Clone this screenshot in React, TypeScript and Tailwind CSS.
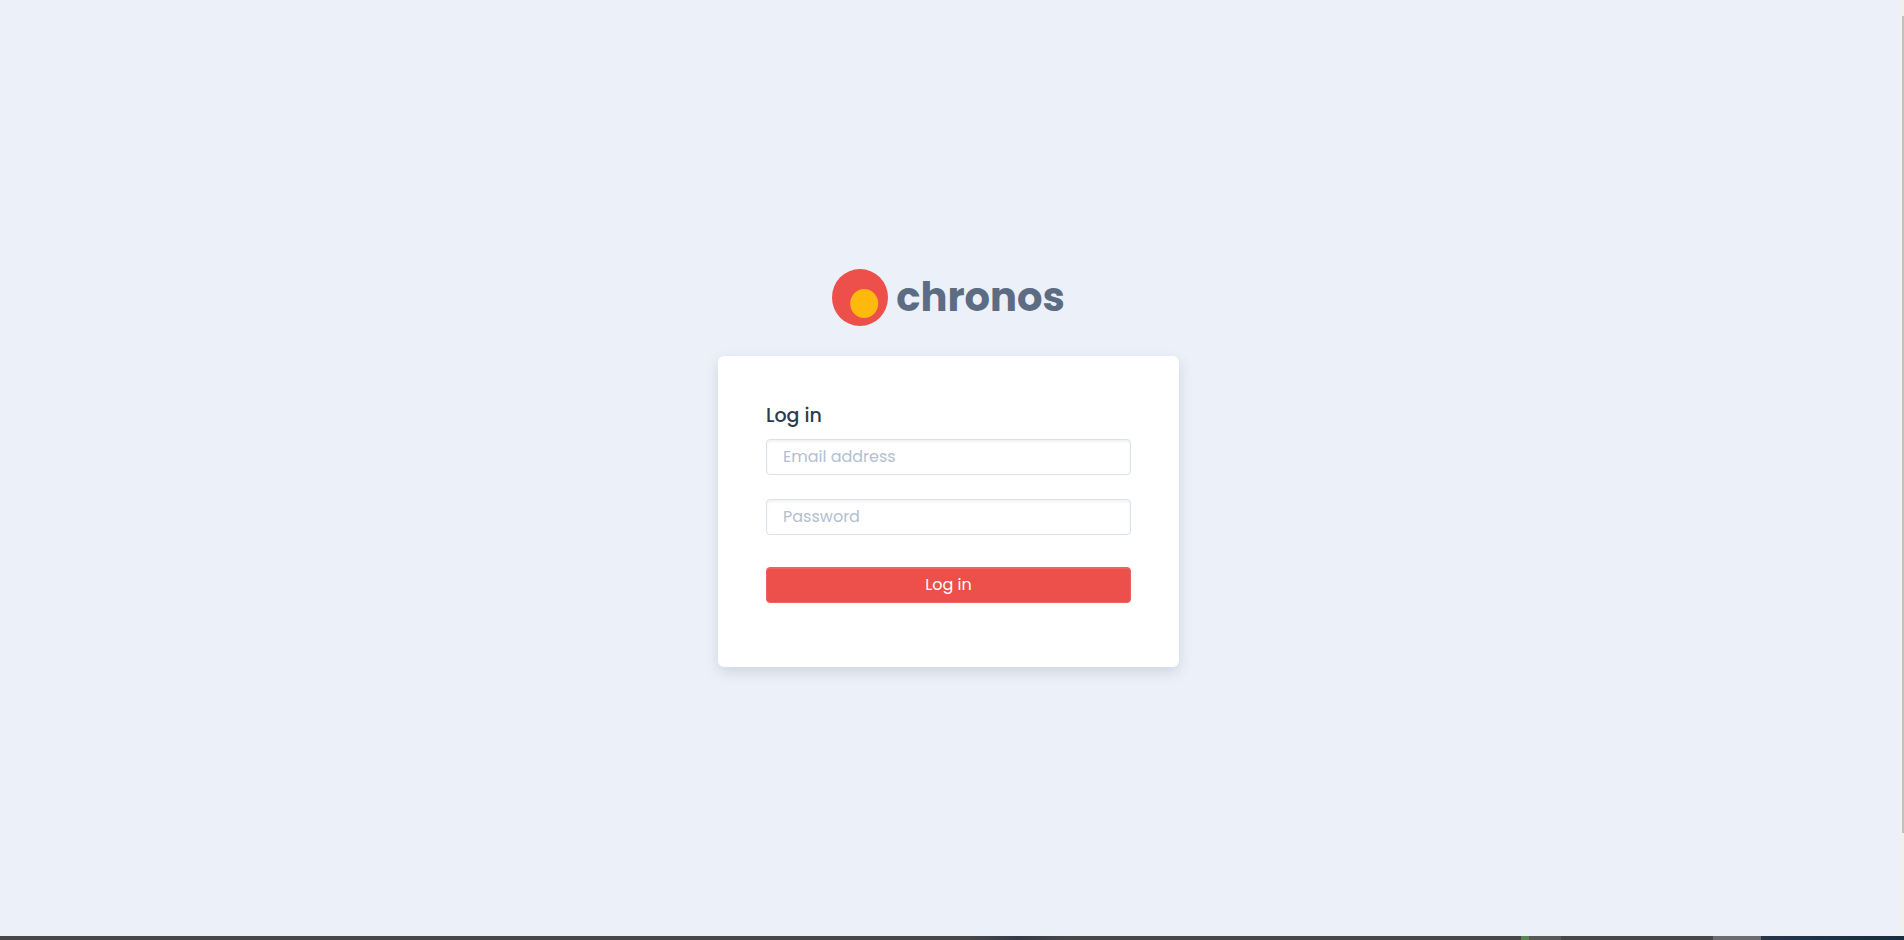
import { useState } from "react";

function Logo() {
  return (
    <div className="flex items-center gap-2">
      <svg className="h-[57px] w-14" viewBox="0 0 56 57" aria-hidden="true">
        <ellipse cx="28" cy="28.5" rx="28" ry="28.5" fill="#ed4f4b" />
        <ellipse cx="32.2" cy="34.5" rx="14" ry="14.5" fill="#ffb80c" />
      </svg>
      <span className="pb-0.5 text-[40px] leading-[52px] font-bold text-[#5c6d83]">chronos</span>
    </div>
  );
}

const fieldClass =
  "block h-9 w-full rounded border border-[#d8e1ee] bg-white px-4 pb-0.5 text-base text-[#2d3b4e] shadow-[inset_0_2px_3px_rgba(0,0,0,0.05)] outline-none placeholder:text-[#b2bfd0]";

function LoginCard() {
  const [email, setEmail] = useState("");
  const [password, setPassword] = useState("");
  return (
    <form
      onSubmit={(e) => e.preventDefault()}
      className="w-full max-w-[461px] rounded-md bg-white px-12 pt-12 pb-16 shadow-[0_5px_14px_rgba(50,65,80,0.16)]"
    >
      <h1 className="mb-[11px] text-[19px] leading-6 font-medium text-[#2d3b4e]">Log in</h1>
      <input
        type="email"
        aria-label="Email address"
        placeholder="Email address"
        value={email}
        onChange={(e) => setEmail(e.target.value)}
        className={fieldClass}
      />
      <input
        type="password"
        aria-label="Password"
        placeholder="Password"
        value={password}
        onChange={(e) => setPassword(e.target.value)}
        className={`${fieldClass} mt-6`}
      />
      <button
        type="submit"
        className="mt-8 block h-9 w-full rounded border border-[#ee625f] bg-[#ed4f4b] text-base text-white shadow-[inset_0_1px_0_#ee625f]"
      >
        Log in
      </button>
    </form>
  );
}

function BottomStrip() {
  return (
    <div className="flex h-1 shrink-0 bg-[#474749]" aria-hidden="true">
      <div className="w-[51%]" />
      <div className="w-[5%] bg-linear-to-r from-[#474749] via-[#343a48] to-[#474749]" />
      <div className="grow" />
      <div className="w-2 bg-[#548552]" />
      <div className="w-8 bg-[#58585a]" />
      <div className="w-[152px]" />
      <div className="w-12 bg-[#6b6c70]" />
      <div className="w-[143px] bg-linear-to-r from-[#25364b] to-[#182d3e]" />
    </div>
  );
}

export default function App() {
  return (
    <div className="flex h-screen flex-col bg-[#ecf1f9] font-['Poppins','Inter',sans-serif]">
      <div className="flex min-h-0 grow">
        <main className="flex grow flex-col items-center justify-center gap-[30px]">
          <Logo />
          <LoginCard />
        </main>
        <div
          className="flex w-[7px] flex-col items-end border-l-2 border-[#ecf1f9] bg-[#f0f0f0] pt-4"
          aria-hidden="true"
        >
          <div className="h-[817px] max-h-full w-0.5 bg-[#c1c1c1]" />
        </div>
      </div>
      <BottomStrip />
    </div>
  );
}
